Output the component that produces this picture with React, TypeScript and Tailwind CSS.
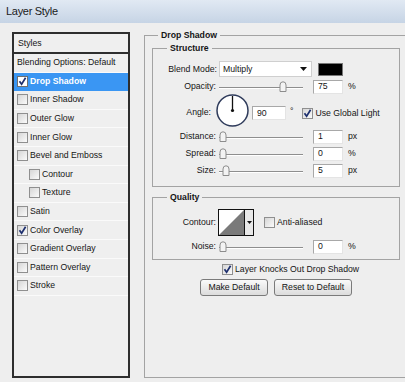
import React from "react";

const CB = ({ checked = false, white = false }: { checked?: boolean; white?: boolean }) => (
  <span
    className={
      white
        ? "inline-flex w-[11px] h-[11px] shrink-0 items-center justify-center border border-[#6f6f6f] bg-white"
        : "inline-flex w-[11px] h-[11px] shrink-0 items-center justify-center border border-[#8f8f8f] bg-gradient-to-br from-[#d6d6d6] to-[#fbfbfb]"
    }
  >
    {checked && (
      <svg width="9" height="9" viewBox="0 0 9 9">
        <path d="M1.5 4.2 L3.6 7.2 L7.6 0.8" fill="none" stroke="#1d2f6e" strokeWidth="1.7" />
      </svg>
    )}
  </span>
);

const Thumb = () => (
  <svg width="8" height="11" viewBox="0 0 8 11">
    <path d="M1 10.5 V4 Q1 0.8 4 0.8 Q7 0.8 7 4 V10.5 Z" fill="#f3f3f3" stroke="#8c8c8c" strokeWidth="1" />
  </svg>
);

const Slider = ({ pos }: { pos: number }) => (
  <div className="relative w-[84px] h-[14px] shrink-0">
    <div className="absolute left-0 right-0 top-[7px] h-px bg-[#8e8e8e] shadow-[0_1px_0_#ffffff]" />
    <div className="absolute top-[1px]" style={{ left: pos }}>
      <Thumb />
    </div>
  </div>
);

const Field = ({ v, w = "w-[30px]" }: { v: string; w?: string }) => (
  <div
    className={
      w +
      " h-[14px] shrink-0 bg-white border-t border-l border-[#a8a8a8] border-r border-b border-r-[#e4e4e4] border-b-[#e4e4e4] pl-[4px] flex items-center"
    }
  >
    {v}
  </div>
);

const items: { t: string; c?: boolean; sel?: boolean; sub?: boolean }[] = [
  { t: "Drop Shadow", c: true, sel: true },
  { t: "Inner Shadow" },
  { t: "Outer Glow" },
  { t: "Inner Glow" },
  { t: "Bevel and Emboss" },
  { t: "Contour", sub: true },
  { t: "Texture", sub: true },
  { t: "Satin" },
  { t: "Color Overlay", c: true },
  { t: "Gradient Overlay" },
  { t: "Pattern Overlay" },
  { t: "Stroke" },
];

const SliderRow = ({ label, pos, v, unit, cls }: { label: string; pos: number; v: string; unit: string; cls: string }) => (
  <div className={"flex items-center h-[15px] " + cls}>
    <div className="w-[63px] text-right shrink-0">{label}</div>
    <div className="ml-[3px]">
      <Slider pos={pos} />
    </div>
    <div className="ml-[10px]">
      <Field v={v} />
    </div>
    <div className="ml-[5px]">{unit}</div>
  </div>
);

export default function App() {
  return (
    <div className="w-[405px] h-[382px] overflow-hidden bg-[#eeeeee] text-[#151515] font-['Liberation_Sans',Arial,sans-serif] text-[8.7px] leading-[11px]">
      {/* title bar */}
      <div className="h-[23px] bg-gradient-to-b from-[#e1e9f3] to-[#c6d4e5] flex items-center pl-[6px] text-[11px] tracking-[-0.3px] text-[#1b1b1b]">
        Layer Style
      </div>
      <div className="flex">
        {/* left panel */}
        <div className="ml-[12px] mt-[9px] w-[118px] h-[346px] border-2 border-[#2e2e2e] bg-[#efefef] flex flex-col shrink-0">
          <div className="h-[20px] border-b-2 border-[#2e2e2e] flex items-center pl-[4px] shrink-0">Styles</div>
          <div className="h-[18.6px] flex items-center pl-[3px] border-b border-[#fafafa] shrink-0">
            Blending Options: Default
          </div>
          {items.map((it) => (
            <div
              key={it.t}
              className={
                (it.sel ? "bg-[#3a96f3] text-white font-bold " : "border-b border-[#fafafa] ") +
                (it.sub ? "pl-[15px] " : "pl-[3px] ") +
                "h-[18.6px] flex items-center gap-[2px] shrink-0"
              }
            >
              <CB checked={it.c} white={it.sel} />
              <span>{it.t}</span>
            </div>
          ))}
        </div>

        {/* right group */}
        <fieldset className="ml-[14px] mt-[7px] w-[290px] h-[348px] border border-r-0 border-[#a3a3a3] shrink-0">
          <legend className="ml-[13px] px-[3px] font-bold">Drop Shadow</legend>
          <div className="pl-[7px] pt-[2px] w-[255px]">
            {/* Structure */}
            <fieldset className="w-[248px] border border-[#a3a3a3] pb-[8px]">
              <legend className="ml-[14px] px-[3px] font-bold">Structure</legend>
              <div className="pt-[7px]">
                <div className="flex items-center h-[16px]">
                  <div className="w-[64px] text-right shrink-0">Blend Mode:</div>
                  <div className="ml-[2px] w-[93px] h-[16px] bg-white border border-[#cfcfcf] flex items-center pl-[3px] justify-between pr-[4px]">
                    <span>Multiply</span>
                    <svg width="7" height="4" viewBox="0 0 7 4">
                      <path d="M0 0 H7 L3.5 4 Z" fill="#111" />
                    </svg>
                  </div>
                  <div className="ml-[6px] w-[25px] h-[13px] bg-black border border-[#777]" />
                </div>
                <SliderRow label="Opacity:" pos={60} v="75" unit="%" cls="mt-[2px]" />
                <div className="flex items-center h-[32px]">
                  <div className="w-[58px] text-right shrink-0 pt-[4px]">Angle:</div>
                  <div className="ml-[5px] shrink-0">
                    <svg width="33" height="33" viewBox="0 0 33 33">
                      <circle cx="16.5" cy="16.5" r="15.5" fill="#ffffff" stroke="#2f3b5b" strokeWidth="1.5" />
                      <line x1="16.5" y1="16.5" x2="16.5" y2="2" stroke="#111" strokeWidth="1.3" />
                      <circle cx="16.5" cy="16.5" r="1.6" fill="#111" />
                    </svg>
                  </div>
                  <div className="ml-[3px] mt-[6px]">
                    <Field v="90" w="w-[34px]" />
                  </div>
                  <div className="ml-[4px] mt-[2px]">°</div>
                  <div className="ml-[9px] mt-[6px] flex items-center gap-[2px]">
                    <CB checked />
                    <span>Use Global Light</span>
                  </div>
                </div>
                <SliderRow label="Distance:" pos={0} v="1" unit="px" cls="mt-[3px]" />
                <SliderRow label="Spread:" pos={0} v="0" unit="%" cls="mt-[2px]" />
                <SliderRow label="Size:" pos={3} v="5" unit="px" cls="mt-[2px]" />
              </div>
            </fieldset>

            {/* Quality */}
            <fieldset className="w-[248px] border border-[#a3a3a3] mt-[5px] pb-[5px]">
              <legend className="ml-[14px] px-[3px] font-bold">Quality</legend>
              <div className="pt-[6px]">
                <div className="flex items-center h-[27px]">
                  <div className="w-[63px] text-right shrink-0">Contour:</div>
                  <div className="ml-[2px] w-[36px] h-[27px] border border-[#111] flex shrink-0">
                    <svg width="25" height="25" viewBox="0 0 25 25" className="bg-white">
                      <path d="M0 25 L25 0 L25 25 Z" fill="#7a7a7a" />
                    </svg>
                    <div className="flex-1 border-l border-[#111] bg-[#e8e8e8] flex items-center justify-center">
                      <svg width="5" height="3" viewBox="0 0 5 3">
                        <path d="M0 0 H5 L2.5 3 Z" fill="#111" />
                      </svg>
                    </div>
                  </div>
                  <div className="ml-[10px] flex items-center gap-[2px]">
                    <CB />
                    <span>Anti-aliased</span>
                  </div>
                </div>
                <SliderRow label="Noise:" pos={0} v="0" unit="%" cls="mt-[3px]" />
              </div>
            </fieldset>

            <div className="mt-[4px] pl-[70px] flex items-center gap-[2px] h-[11px]">
              <CB checked />
              <span>Layer Knocks Out Drop Shadow</span>
            </div>
            <div className="mt-[4px] pl-[48px] flex gap-[6px]">
              <div className="w-[68px] h-[17px] rounded-[3px] border border-[#7a7a7a] bg-gradient-to-b from-[#fafafa] to-[#dcdcdc] flex items-center justify-center">
                Make Default
              </div>
              <div className="w-[78px] h-[17px] rounded-[3px] border border-[#7a7a7a] bg-gradient-to-b from-[#fafafa] to-[#dcdcdc] flex items-center justify-center">
                Reset to Default
              </div>
            </div>
          </div>
        </fieldset>
      </div>
    </div>
  );
}
